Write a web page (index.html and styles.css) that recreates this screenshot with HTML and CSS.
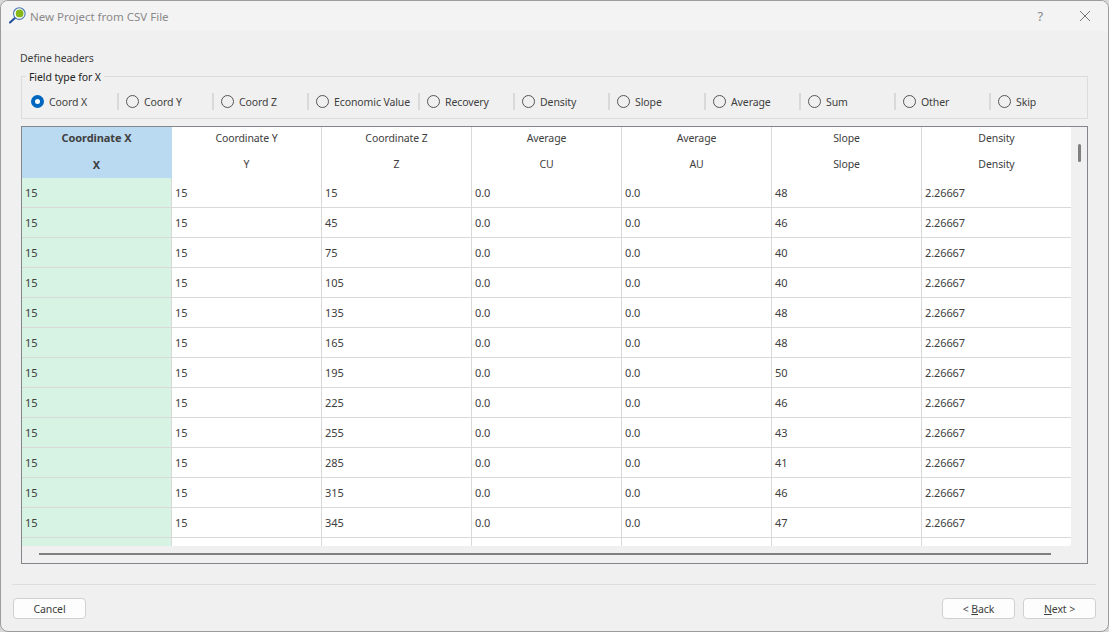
FILE: index.html
```html
<!DOCTYPE html>
<html lang="en">
<head>
  <meta charset="UTF-8" />
  <title>New Project from CSV File</title>
  <link rel="stylesheet" href="styles.css">
</head>
<body>
  <div class="window">
    <div class="titlebar">
      <svg class="app-icon" width="18" height="18" viewBox="0 0 18 18">
        <path d="M6.5 10.5L1 15.5" stroke="#1f4f9c" stroke-width="2" stroke-linecap="round" />
        <circle cx="10.3" cy="6.6" r="5.8" fill="#ffffff" stroke="#4a78b0" stroke-width="1.1" />
        <circle cx="10.6" cy="6.4" r="3.9" fill="#86b817" />
      </svg>
      <span class="title">New Project from CSV File</span>
      <span class="help">?</span>
      <svg class="close" width="12" height="12" viewBox="0 0 12 12">
        <path d="M1 1L11 11M11 1L1 11" stroke="#777" stroke-width="1" fill="none" />
      </svg>
    </div>

    <div class="content">
      <div class="page-label">Define headers</div>

      <div class="group">
        <span class="legend">Field type for X</span>
        <label class="field"><span class="radio checked"></span>Coord X</label>
        <label class="field"><span class="radio"></span>Coord Y</label>
        <label class="field"><span class="radio"></span>Coord Z</label>
        <label class="field wide"><span class="radio"></span>Economic Value</label>
        <label class="field"><span class="radio"></span>Recovery</label>
        <label class="field"><span class="radio"></span>Density</label>
        <label class="field slope"><span class="radio"></span>Slope</label>
        <label class="field"><span class="radio"></span>Average</label>
        <label class="field"><span class="radio"></span>Sum</label>
        <label class="field"><span class="radio"></span>Other</label>
        <label class="field last"><span class="radio"></span>Skip</label>
      </div>

      <div class="frame">
        <div class="grid-row">
          <div class="viewport">
            <table>
              <thead>
                <tr>
                  <th class="selected">Coordinate X</th>
                  <th>Coordinate Y</th>
                  <th>Coordinate Z</th>
                  <th>Average</th>
                  <th>Average</th>
                  <th>Slope</th>
                  <th>Density</th>
                </tr>
                <tr class="sub">
                  <th class="selected">X</th>
                  <th>Y</th>
                  <th>Z</th>
                  <th>CU</th>
                  <th>AU</th>
                  <th>Slope</th>
                  <th>Density</th>
                </tr>
              </thead>
              <tbody>
                <tr><td class="mapped">15</td><td>15</td><td>15</td><td>0.0</td><td>0.0</td><td>48</td><td>2.26667</td></tr>
                <tr><td class="mapped">15</td><td>15</td><td>45</td><td>0.0</td><td>0.0</td><td>46</td><td>2.26667</td></tr>
                <tr><td class="mapped">15</td><td>15</td><td>75</td><td>0.0</td><td>0.0</td><td>40</td><td>2.26667</td></tr>
                <tr><td class="mapped">15</td><td>15</td><td>105</td><td>0.0</td><td>0.0</td><td>40</td><td>2.26667</td></tr>
                <tr><td class="mapped">15</td><td>15</td><td>135</td><td>0.0</td><td>0.0</td><td>48</td><td>2.26667</td></tr>
                <tr><td class="mapped">15</td><td>15</td><td>165</td><td>0.0</td><td>0.0</td><td>48</td><td>2.26667</td></tr>
                <tr><td class="mapped">15</td><td>15</td><td>195</td><td>0.0</td><td>0.0</td><td>50</td><td>2.26667</td></tr>
                <tr><td class="mapped">15</td><td>15</td><td>225</td><td>0.0</td><td>0.0</td><td>46</td><td>2.26667</td></tr>
                <tr><td class="mapped">15</td><td>15</td><td>255</td><td>0.0</td><td>0.0</td><td>43</td><td>2.26667</td></tr>
                <tr><td class="mapped">15</td><td>15</td><td>285</td><td>0.0</td><td>0.0</td><td>41</td><td>2.26667</td></tr>
                <tr><td class="mapped">15</td><td>15</td><td>315</td><td>0.0</td><td>0.0</td><td>46</td><td>2.26667</td></tr>
                <tr><td class="mapped">15</td><td>15</td><td>345</td><td>0.0</td><td>0.0</td><td>47</td><td>2.26667</td></tr>
                <tr><td class="mapped"></td><td></td><td></td><td></td><td></td><td></td><td></td></tr>
              </tbody>
            </table>
          </div>
          <div class="vscroll"><div class="vthumb"></div></div>
        </div>
        <div class="hscroll"><div class="hthumb"></div></div>
      </div>
    </div>

    <div class="footer">
      <button class="btn">Cancel</button>
      <div class="nav">
        <button class="btn">&lt; <u>B</u>ack</button>
        <button class="btn"><u>N</u>ext &gt;</button>
      </div>
    </div>
  </div>
</body>
</html>
```

FILE: styles.css
```css
html, body {
  margin: 0;
  height: 100%;
  overflow: hidden;
}
body {
  background: #d8d8d8;
  font-family: "Noto Sans", sans-serif;
  font-size: 10.5px;
  letter-spacing: -0.1px;
  color: #404040;
}
.window {
  box-sizing: border-box;
  height: 632px;
  background: #f0f0f0;
  border: 1px solid #9c9c9c;
  border-radius: 8px;
  overflow: hidden;
}
.titlebar {
  display: flex;
  align-items: center;
  height: 30px;
  padding: 0 17px 0 8px;
  background: #f3f3f3;
}
.app-icon {
  margin-right: 3px;
}
.title {
  flex: 1;
  font-size: 11.5px;
  letter-spacing: 0;
  color: #8a8a8a;
}
.help {
  margin-right: 36px;
  font-size: 13px;
  color: #888;
}
.content {
  padding: 20px 20px 0;
}
.page-label {
  height: 14px;
  line-height: 14px;
  margin-bottom: 11px;
  margin-left: -1px;
}
.group {
  position: relative;
  box-sizing: border-box;
  display: flex;
  height: 43px;
  padding: 16px 0 0 2px;
  border: 1px solid #dcdcdc;
}
.legend {
  position: absolute;
  top: -7px;
  left: 4px;
  padding: 0 3px;
  line-height: 14px;
  background: #f0f0f0;
  color: #222;
}
.field {
  box-sizing: border-box;
  display: flex;
  align-items: center;
  width: 95px;
  height: 17px;
  padding-left: 7px;
  border-right: 2px solid #d9d9d9;
}
.field.wide {
  width: 111px;
}
.field.slope {
  width: 96px;
}
.field.last {
  border-right: none;
}
.radio {
  box-sizing: border-box;
  width: 13px;
  height: 13px;
  margin-right: 5px;
  border: 1px solid #555;
  border-radius: 50%;
}
.radio.checked {
  border: 4px solid #0067c0;
  background: #fff;
}
.frame {
  box-sizing: border-box;
  height: 438px;
  margin-top: 7px;
  border: 1px solid #85858c;
}
.grid-row {
  display: flex;
  height: 419px;
}
.viewport {
  width: 1049px;
  overflow: hidden;
  background: #fff;
  border-bottom-right-radius: 3px;
}
table {
  table-layout: fixed;
  width: 1050px;
  border-collapse: separate;
  border-spacing: 0;
}
th, td {
  box-sizing: border-box;
  width: 150px;
  padding: 0;
  border-right: 1px solid #d9d9d9;
}
th {
  height: 25px;
  padding-bottom: 4px;
  font-weight: normal;
  text-align: center;
}
.sub th {
  height: 26px;
  padding-bottom: 2px;
}
th.selected {
  background: #badaf2;
  font-weight: bold;
  font-size: 11px;
  border-right-color: #badaf2;
}
td {
  height: 30px;
  padding-left: 3px;
  border-bottom: 1px solid #d9d9d9;
  font-size: 11px;
}
td.mapped {
  background: #d6f3e3;
}
.vscroll {
  flex: 1;
  padding: 17px 0 0 7px;
}
.vthumb {
  width: 3px;
  height: 18px;
  background: #7f7f7f;
  border-radius: 2px;
}
.hscroll {
  padding: 7px 36px 0 17px;
}
.hthumb {
  height: 2px;
  background: #7f7f7f;
}
.footer {
  display: flex;
  justify-content: space-between;
  margin: 20px 12px 0 11px;
  padding: 13px 0 0 1px;
  border-top: 1px solid #dedede;
}
.nav {
  display: flex;
  gap: 8px;
}
.btn {
  box-sizing: border-box;
  width: 73px;
  height: 21px;
  padding: 0;
  border: 1px solid #d0d0d0;
  border-radius: 4px;
  background: #fdfdfd;
  font: inherit;
  letter-spacing: inherit;
  color: #404040;
}
```
